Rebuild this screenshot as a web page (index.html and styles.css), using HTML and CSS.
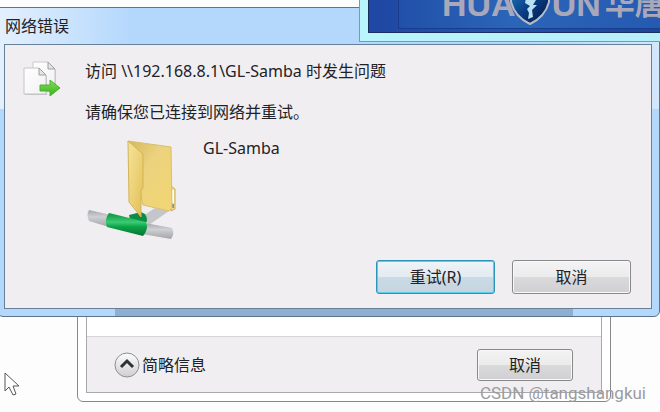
FILE: index.html
```
<!DOCTYPE html>
<html lang="zh-CN">
<head>
<meta charset="utf-8">
<title>网络错误</title>
<link rel="stylesheet" href="styles.css">
</head>
<body>
<div class="desktop">

  <!-- copy progress window, behind the dialog -->
  <section class="window progress">
    <div class="progress-body">
      <div class="progress-blank"></div>
      <div class="progress-bar">
        <button type="button" class="toggle">
          <svg width="26" height="26" viewBox="0 0 26 26">
            <defs>
              <linearGradient id="knob" x1="0" y1="0" x2="0" y2="1">
                <stop offset="0" stop-color="#fdfdfd"/>
                <stop offset="1" stop-color="#cfcfd1"/>
              </linearGradient>
            </defs>
            <circle cx="13" cy="13" r="12" fill="url(#knob)" stroke="#8f8f91"/>
            <path d="M7 15 13 9 19 15" fill="none" stroke="#2f3135" stroke-width="3"/>
          </svg>
          <span>简略信息</span>
        </button>
        <button type="button" class="btn small">取消</button>
      </div>
    </div>
  </section>

  <!-- network error dialog -->
  <section class="window dialog">
    <h1>网络错误</h1>
    <div class="dialog-body">
      <svg class="copy-icon" width="40" height="38" viewBox="0 0 40 38">
        <defs>
          <linearGradient id="paper" x1="0" y1="0" x2="1" y2="1">
            <stop offset="0" stop-color="#ffffff"/>
            <stop offset="1" stop-color="#f1f1f3"/>
          </linearGradient>
          <linearGradient id="arrow" x1="0" y1="0" x2="0" y2="1">
            <stop offset="0" stop-color="#86dc58"/>
            <stop offset="1" stop-color="#36b31c"/>
          </linearGradient>
        </defs>
        <path d="M12 3H27L34 10V32H12Z" fill="#c4c4c6"/>
        <path d="M11 2H26L33 9V30H11Z" fill="url(#paper)" stroke="#c9c9cb"/>
        <path d="M26 2V9H33Z" fill="#e4e4e6" stroke="#9f9fa1"/>
        <path d="M3 9H18L25 16V35H3Z" fill="#c4c4c6"/>
        <path d="M2 8H17L24 15V34H2Z" fill="url(#paper)" stroke="#c4c4c6"/>
        <path d="M17 8V15H24Z" fill="#e4e4e6" stroke="#9f9fa1"/>
        <path d="M18 25H28V20L38 28 28 36V31H18Z" fill="url(#arrow)" stroke="#4fae36" stroke-linejoin="round"/>
      </svg>
      <div class="message">
        <p>访问 \\192.168.8.1\GL-Samba 时发生问题</p>
        <p>请确保您已连接到网络并重试。</p>
        <div class="share">
          <svg width="92" height="104" viewBox="0 0 92 104">
            <defs>
              <linearGradient id="folderBack" x1="0" y1="0" x2="1" y2="1">
                <stop offset="0" stop-color="#d4b65f"/>
                <stop offset=".4" stop-color="#ecd27e"/>
                <stop offset="1" stop-color="#f2d672"/>
              </linearGradient>
              <linearGradient id="folderFront" x1="0" y1="0" x2="1" y2="1">
                <stop offset="0" stop-color="#f6e49c"/>
                <stop offset="1" stop-color="#e3bf53"/>
              </linearGradient>
              <linearGradient id="pipe" x1="0" y1="0" x2="0" y2="1">
                <stop offset="0" stop-color="#a4a6aa"/>
                <stop offset=".4" stop-color="#cfd0d3"/>
                <stop offset="1" stop-color="#a2a4a8"/>
              </linearGradient>
              <linearGradient id="joint" x1="0" y1="0" x2="0" y2="1">
                <stop offset="0" stop-color="#0a9140"/>
                <stop offset=".4" stop-color="#3ccb74"/>
                <stop offset=".6" stop-color="#0ba348"/>
                <stop offset="1" stop-color="#057434"/>
              </linearGradient>
            </defs>
            <path d="M58 80 70 72 84 75 64 89Z" fill="#c5c6ca"/>
            <path d="M4 74 26 79 24 91 4 85Q1 79 4 74Z" fill="url(#pipe)"/>
            <path d="M60 87 87 92Q90 98 86 103L57 98Z" fill="url(#pipe)"/>
            <path d="M44 79 56 76 60 78Q64 84 60 89L46 90Z" fill="#0d8c42"/>
            <path d="M24 77 61 86Q64 93 58 100L22 91Q19 83 24 77Z" fill="url(#joint)"/>
            <path d="M86 50 90 53V73L86 75Z" fill="#f1dda0" stroke="#c8ac5b"/>
            <path d="M87 54H89V67H87Z" fill="#ffffff"/>
            <path d="M87 68H89V72H87Z" fill="#7893ad"/>
            <path d="M43 5 86 11 87 72 84 75 58 69Z" fill="url(#folderBack)" stroke="#d9bf6c"/>
            <path d="M43 5 58 18V52L56 54V81L44 66Z" fill="url(#folderFront)" stroke="#d2b45a"/>
          </svg>
          <span>GL-Samba</span>
        </div>
      </div>
      <div class="actions">
        <button type="button" class="btn default">重试(R)</button>
        <button type="button" class="btn">取消</button>
      </div>
    </div>
  </section>

  <!-- site window peeking in from the top -->
  <section class="window site">
    <div class="banner">
      <div class="logo">
        <span>HUA</span>
        <svg width="42" height="40" viewBox="0 0 42 40">
          <defs>
            <linearGradient id="shield" x1="0" y1="0" x2="1" y2="1">
              <stop offset="0" stop-color="#1f7fc0"/>
              <stop offset=".5" stop-color="#0a3f86"/>
              <stop offset="1" stop-color="#03123c"/>
            </linearGradient>
          </defs>
          <path d="M2 0H40V17Q36 32 21 39 6 32 2 17Z" fill="url(#shield)" stroke="#b7bccb" stroke-width="2"/>
          <path d="M17 13 27 15 24 20 28 20 23 25 24 32 19 34 20 28 18 24 21 21 16 18Z" fill="#b9e0f1"/>
        </svg>
        <span>UN</span>
        <span class="cn">华唐</span>
      </div>
    </div>
  </section>

  <svg class="cursor" width="18" height="26" viewBox="0 0 18 26">
    <path d="M1 1V19L5 15 9 23 12 22 9 14H15Z" fill="#ffffff" stroke="#57575b"/>
  </svg>
  <div class="watermark">CSDN @tangshangkui</div>
</div>
</body>
</html>
```
FILE: styles.css
```
* {
  box-sizing: border-box;
}
body {
  margin: 0;
  font-family: "Noto Sans", "Noto Sans CJK SC", sans-serif;
  font-size: 16px;
  line-height: 24px;
  color: #222226;
}
h1, p {
  margin: 0;
  font-size: 16px;
  font-weight: normal;
}
.desktop {
  position: relative;
  min-height: 100vh;
  overflow: hidden;
  background: #fdfdfe;
}
.window {
  position: absolute;
}

/* buttons */
.btn {
  width: 119px;
  height: 34px;
  padding: 0;
  border: 1px solid #89898c;
  border-radius: 3px;
  background: linear-gradient(#f3f3f4, #ebebec 50%, #dadadc 50%, #d0d0d2);
  box-shadow: inset 0 0 0 1px #f8f8f9;
  font: inherit;
  color: inherit;
}
.btn.default {
  border-color: #2c94bb;
  background: linear-gradient(#eff4f8, #e2ebf1 50%, #cbdbe5 50%, #c5d5df);
  box-shadow: inset 0 0 0 1px #58cdec;
}
.btn.small {
  width: 96px;
  height: 32px;
}

/* error dialog */
.dialog {
  top: 7px;
  left: -3px;
  right: 0;
  padding: 0 7px 7px 6px;
  border: 1px solid #5d7388;
  border-radius: 0 0 6px 6px;
  background:
    linear-gradient(#8eafd2, #8eafd2) 117px 100% / calc(100% - 203px) 7px no-repeat,
    linear-gradient(#b4d8fc, #b4d8fc) 0 100% / 100% calc(100% - 101px) no-repeat,
    linear-gradient(90deg, #e4f0fd, #b4d8fc 20%, #b4d8fc 80%, #d3e7fb);
}
.dialog h1 {
  height: 36px;
  padding: 6px 0 0 1px;
}
.dialog-body {
  display: grid;
  grid-template-columns: 63px 1fr;
  padding: 14px 20px 14px 17px;
  border: 1px solid #66809a;
  background: #f0eef1;
}
.copy-icon {
  margin-top: 1px;
}
.message p {
  margin-bottom: 17px;
}
.share {
  display: flex;
  gap: 26px;
  height: 124px;
  margin-top: -5px;
}
.share svg {
  overflow: visible;
}
.actions {
  grid-column: 1 / -1;
  display: flex;
  justify-content: flex-end;
  gap: 17px;
}

/* progress window */
.progress {
  top: 240px;
  left: 77px;
  right: 49px;
  padding: 0 8px 8px;
  border: 1px solid #88888b;
  border-radius: 6px;
  background: #ffffff;
}
.progress-body {
  border: 1px solid #a9a9ac;
}
.progress-blank {
  height: 94px;
}
.progress-bar {
  display: flex;
  justify-content: space-between;
  align-items: center;
  height: 56px;
  padding: 0 28px 0 27px;
  border-top: 1px solid #d6d6d9;
  background: #f0eef1;
}
.toggle {
  display: flex;
  align-items: center;
  gap: 2px;
  padding: 0;
  border: 0;
  background: none;
  font: inherit;
  color: inherit;
}

/* site window */
.site {
  top: -20px;
  left: 359px;
  right: -20px;
  padding: 0 0 8px 8px;
  border: 1px solid #6f9fb0;
  background: linear-gradient(90deg, #b9f5fc, #b6eefa);
}
.banner {
  height: 52px;
  padding: 0 0 4px 29px;
  border: 1px solid #19305f;
  background: linear-gradient(90deg, #1f47a3, #2454ac 40%, #1b4498);
}
.logo {
  display: flex;
  height: 47px;
  padding: 2px 0 0 43px;
  border: 1px solid #193d8c;
  background: linear-gradient(90deg, #2150a9, #2b65b8 40%, #2459af);
  font: bold 34px/38px "Liberation Sans", "Noto Sans CJK SC", sans-serif;
  color: #a9a8bb;
  white-space: nowrap;
}
.logo svg {
  flex: none;
  margin: 0 1px 0 -7px;
}
.logo .cn {
  margin-left: 4px;
  font-size: 30px;
}

.cursor {
  position: absolute;
  left: 4px;
  bottom: 14px;
}
.watermark {
  position: absolute;
  right: 14px;
  bottom: 7px;
  font-family: Roboto, sans-serif;
  font-size: 17px;
  color: #9b9b9f;
}
```
